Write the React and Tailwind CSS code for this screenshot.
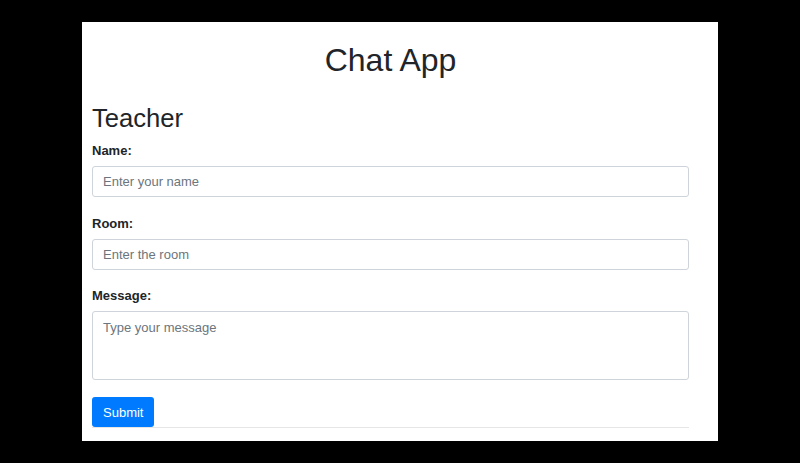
export default function App() {
  return (
    <div
      className="min-h-screen bg-black flex items-center justify-center"
      style={{ fontFamily: '"Liberation Sans", Arial, sans-serif' }}
    >
      <div className="w-[636px] h-[419px] bg-white pl-[10px] pr-[29px] pt-[19px] text-[#212529]">
        <h1 className="text-[32px] leading-[38px] text-center">Chat App</h1>
        <h2 className="mt-[24px] text-[25.6px] leading-[31px]">Teacher</h2>

        <form onSubmit={(e) => e.preventDefault()}>
          <div className="mt-[7px]">
            <label htmlFor="name" className="block text-[13px] leading-[19px] font-bold">
              Name:
            </label>
            <input
              id="name"
              type="text"
              placeholder="Enter your name"
              className="mt-[6px] block w-full h-[31px] px-[10px] text-[13px] leading-[19px] border border-[#ced4da] rounded-[3px] placeholder:text-[#6c757d] outline-none"
            />
          </div>

          <div className="mt-[17px]">
            <label htmlFor="room" className="block text-[13px] leading-[19px] font-bold">
              Room:
            </label>
            <input
              id="room"
              type="text"
              placeholder="Enter the room"
              className="mt-[6px] block w-full h-[31px] px-[10px] text-[13px] leading-[19px] border border-[#ced4da] rounded-[3px] placeholder:text-[#6c757d] outline-none"
            />
          </div>

          <div className="mt-[16px]">
            <label htmlFor="message" className="block text-[13px] leading-[19px] font-bold">
              Message:
            </label>
            <textarea
              id="message"
              placeholder="Type your message"
              className="mt-[6px] block w-full h-[69px] px-[10px] pt-[6px] text-[13px] leading-[19px] border border-[#ced4da] rounded-[3px] placeholder:text-[#6c757d] outline-none resize-none"
            />
          </div>

          <button
            type="submit"
            className="mt-[17px] block h-[30px] px-[11px] text-[13px] leading-[19px] text-white bg-[#007bff] rounded-[3px]"
          >
            Submit
          </button>
          <hr className="border-0 border-t border-[#e6e6e6]" />
        </form>
      </div>
    </div>
  );
}
